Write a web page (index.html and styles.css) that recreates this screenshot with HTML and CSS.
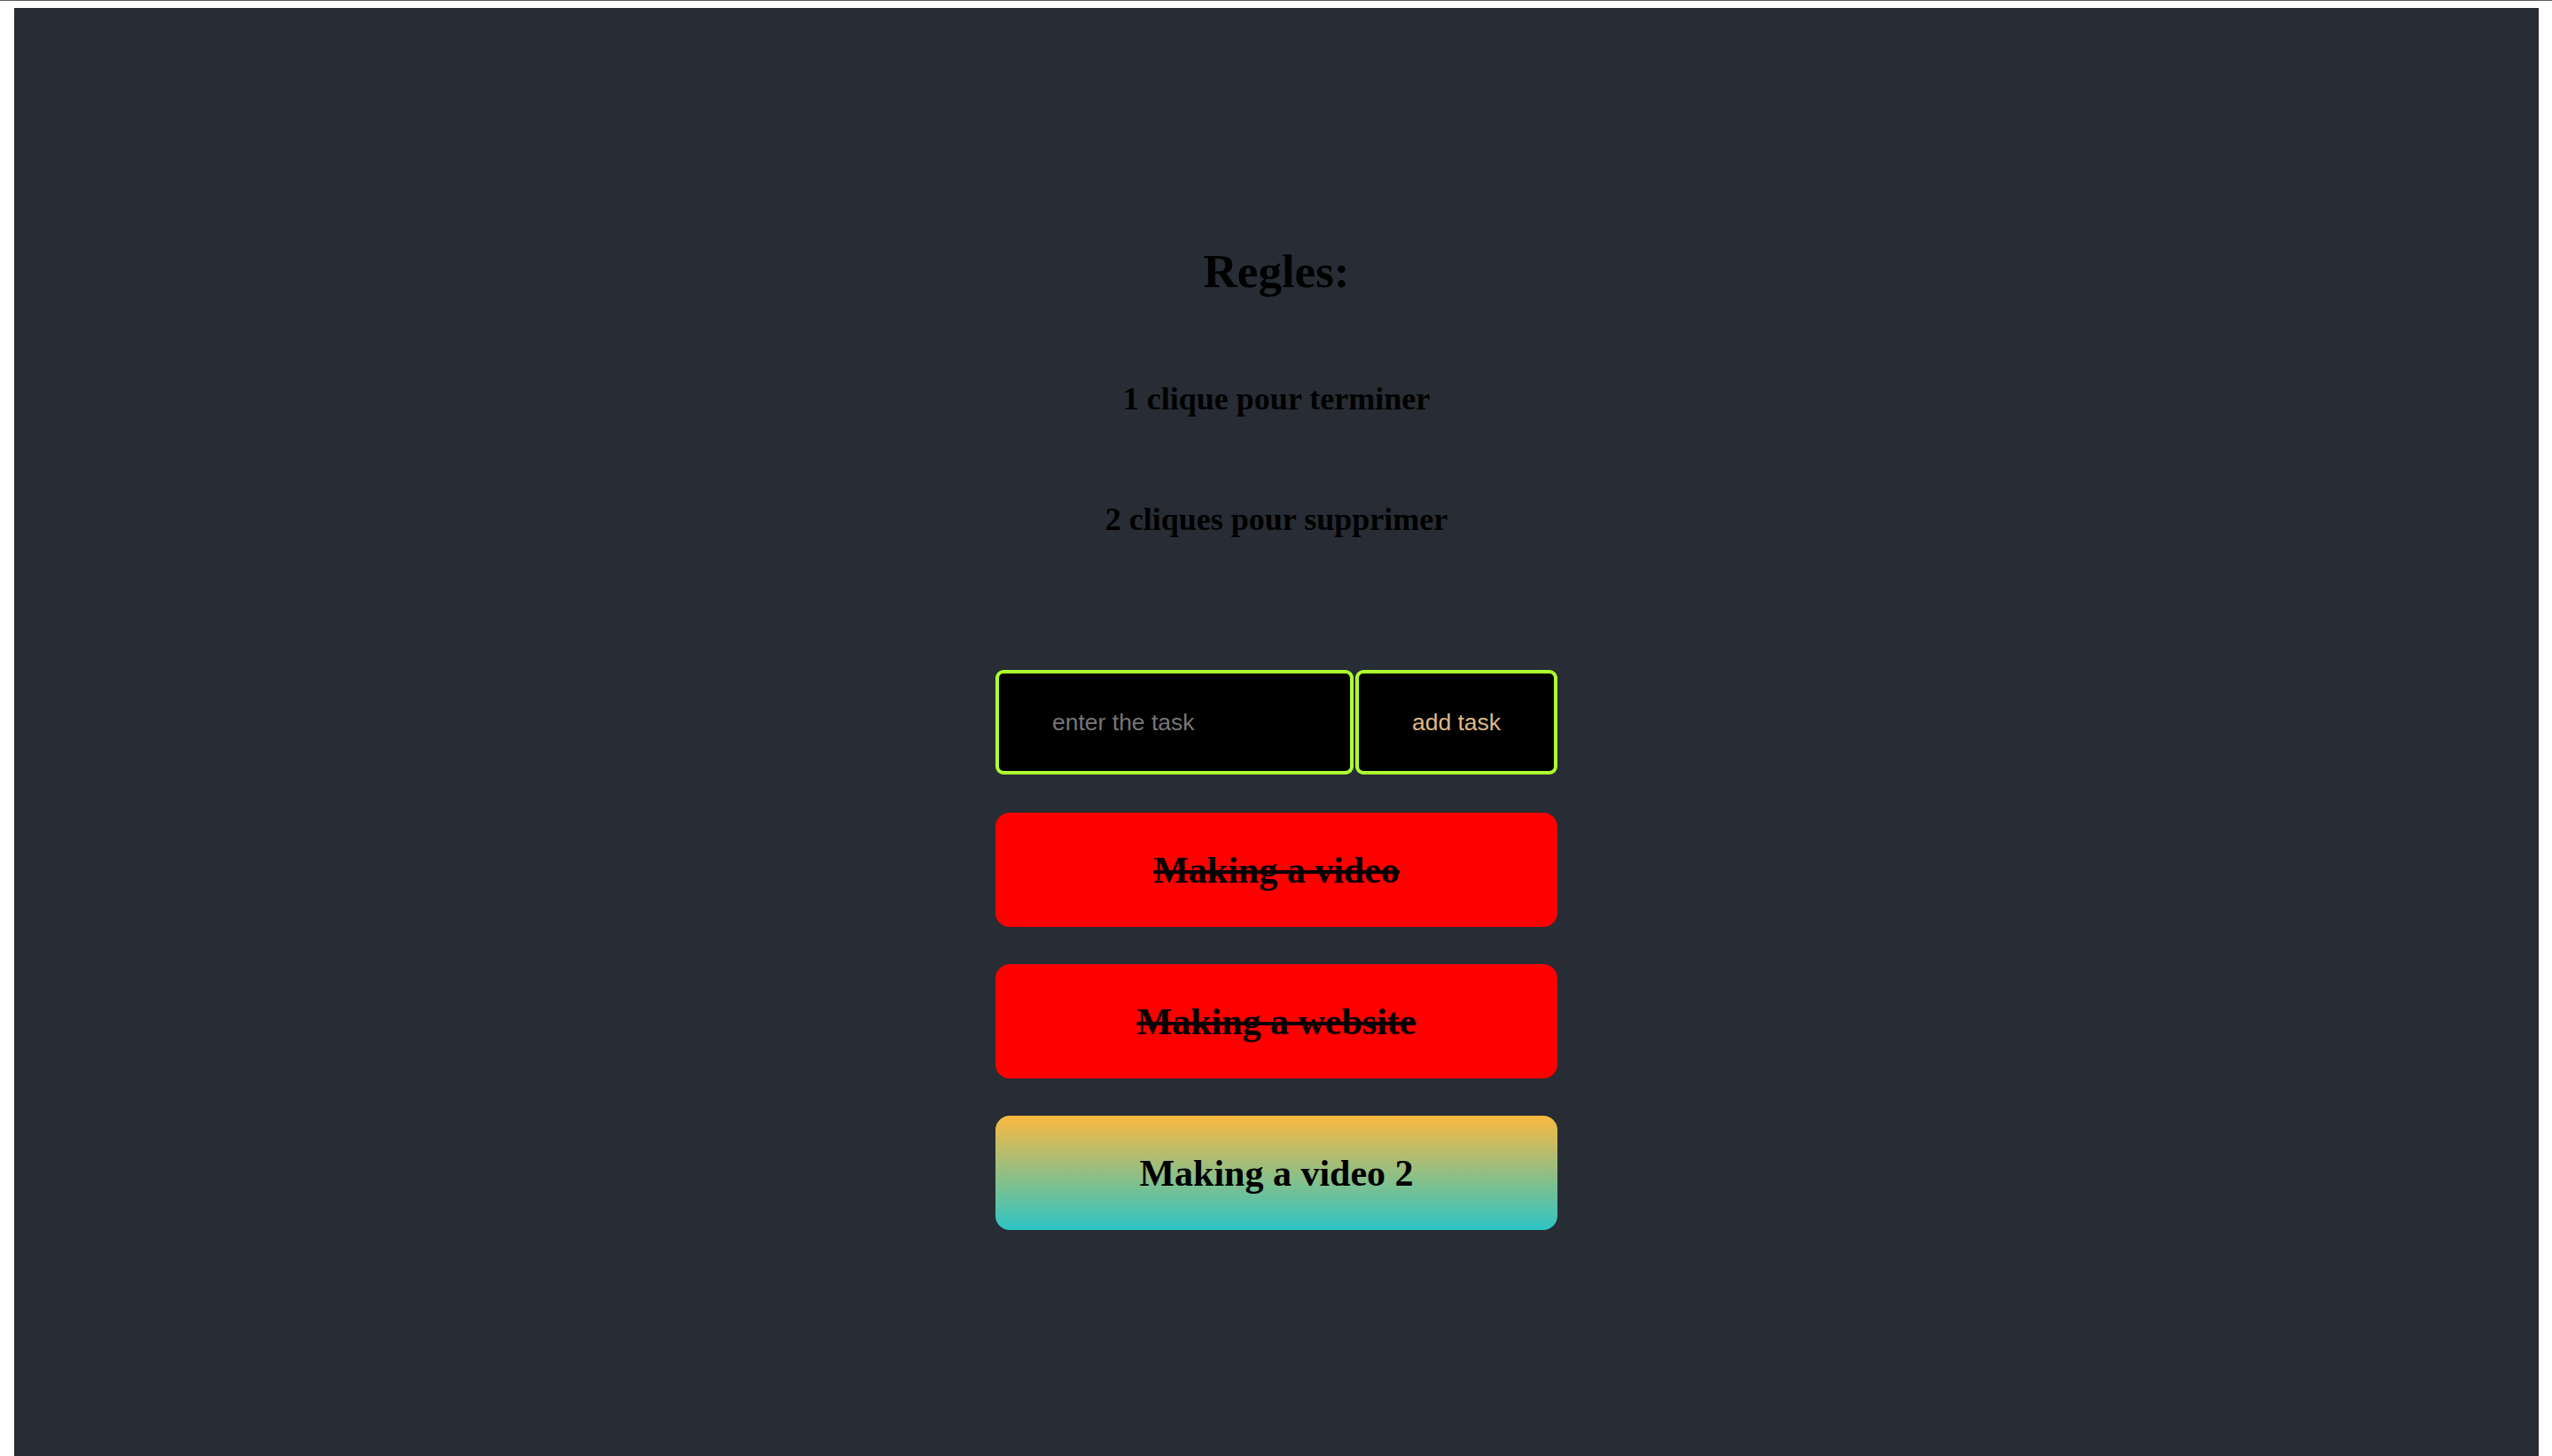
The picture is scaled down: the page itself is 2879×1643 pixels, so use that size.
FILE: index.html
```html
<!DOCTYPE html>
<html lang="fr">
<head>
<meta charset="utf-8">
<title>Todo</title>
<link rel="stylesheet" href="styles.css">
</head>
<body>
<div class="app">
  <h1 class="title">Regles:</h1>
  <h2 class="rule rule-first">1 clique pour terminer</h2>
  <h2 class="rule rule-second">2 cliques pour supprimer</h2>
  <form class="task-form">
    <input class="task-input" type="text" placeholder="enter the task">
    <button class="task-button" type="button">add task</button>
  </form>
  <ul class="task-list">
    <li class="task task-done">Making a video</li>
    <li class="task task-done">Making a website</li>
    <li class="task task-active">Making a video 2</li>
  </ul>
</div>
</body>
</html>
```
FILE: styles.css
```css
* { box-sizing: border-box; }
html, body { height: 100%; }
body {
  margin: 0;
  background: #ffffff;
  border-top: 1px solid #5c5c5c;
  padding: 8px 15px 0 16px;
  font-family: "Liberation Serif", "Times New Roman", serif;
}
.app {
  background: #282c34;
  min-height: 1634px;
  display: flex;
  flex-direction: column;
  align-items: center;
  padding-top: 267px;
  color: #000;
}
.title {
  margin: 0;
  font-size: 53px;
  line-height: 60px;
  font-weight: bold;
}
.rule {
  margin: 0;
  font-size: 36px;
  line-height: 42px;
  font-weight: bold;
}
.rule-first { margin-top: 93px; }
.rule-second { margin-top: 94px; }
.task-form {
  margin: 149px 0 0;
  display: flex;
  gap: 2px;
  width: 634px;
  height: 118px;
}
.task-input, .task-button {
  background: #000;
  border: 4px solid #adff2f;
  border-radius: 9px;
  font-family: "Liberation Sans", Arial, sans-serif;
  font-size: 26.5px;
  outline: none;
  height: 118px;
}
.task-input {
  width: 404px;
  padding: 0 0 0 60px;
  color: #ddd;
}
.task-input::placeholder { color: #767676; }
.task-button {
  width: 228px;
  color: #deb887;
  padding: 0;
}
.task-list {
  list-style: none;
  margin: 43px 0 0;
  padding: 0;
  display: flex;
  flex-direction: column;
  gap: 42px;
  width: 634px;
}
.task {
  height: 129px;
  border-radius: 16px;
  display: flex;
  align-items: center;
  justify-content: center;
  font-size: 42px;
  font-weight: bold;
}
.task-done {
  background: #ff0000;
  text-decoration: line-through;
}
.task-active {
  background: linear-gradient(to bottom, #fbb941, #2cc4c4);
}
```
